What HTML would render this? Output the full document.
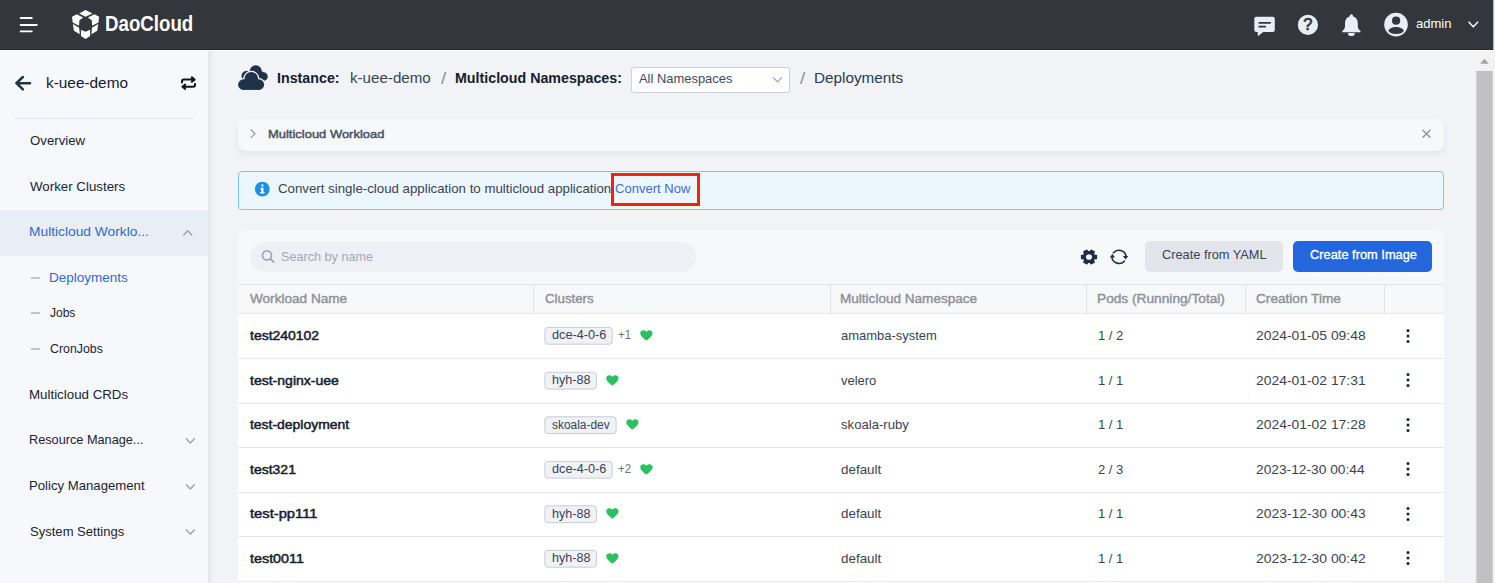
<!DOCTYPE html>
<html><head><meta charset="utf-8">
<style>
*{box-sizing:border-box;margin:0;padding:0}
html,body{width:1495px;height:583px;overflow:hidden;background:#f2f3f7;font-family:"Liberation Sans",sans-serif}
.abs{position:absolute}
.t{position:absolute;white-space:nowrap;line-height:1;transform-origin:0 0}
#top{position:absolute;left:0;top:0;width:1494px;height:50px;background:#33363c;border-bottom:1px solid #272a2f}
#topedge{position:absolute;left:0;top:50px;width:1494px;height:1px;background:#fcfcfe;z-index:5}
#side{position:absolute;left:0;top:51px;width:208px;height:532px;background:#f7f8fc}
#sideshadow{position:absolute;left:208px;top:51px;width:6px;height:534px;background:linear-gradient(to right,rgba(40,50,80,.07),rgba(40,50,80,0))}
.dash{position:absolute;left:30.5px;width:9px;height:1.2px;background:#bfc5cf}
.row{position:absolute;left:238px;width:1206px;height:44.6px;background:#fff;border-top:1px solid #e4e7ed}
.tag{position:absolute;border:1px solid #c6cbd6;background:#f1f2f6;border-radius:3px}
.vsep{position:absolute;top:285px;width:1px;height:28px;background:#e1e4ea}
</style></head><body>
<!-- header -->
<div id="top"></div><div id="topedge"></div>
<svg class="abs" style="left:0;top:0" width="210" height="49" viewBox="0 0 210 49">
  <g stroke="#fff" stroke-width="1.8" stroke-linecap="round"><line x1="20.6" y1="18" x2="31.8" y2="18"/><line x1="20.6" y1="25" x2="36.8" y2="25"/><line x1="20.6" y1="31.3" x2="31.8" y2="31.3"/></g>
</svg>
<svg class="abs" style="left:66px;top:4px" width="60" height="40" viewBox="0 0 874 583">
  <g fill="#fff">
   <polygon points="285,88 385,137 285,185 190,137"/>
   <polygon points="88,185 155,150 250,197 195,238 190,318 97,268"/>
   <polygon points="482,185 415,150 320,197 375,238 380,318 473,268"/>
   <polygon points="100,292 192,345 200,440 115,390"/>
   <polygon points="470,292 378,345 370,440 455,390"/>
   <polygon points="220,375 285,405 350,375 352,465 285,510 218,465"/>
  </g>
</svg>
<!-- header right icons -->
<svg class="abs" style="left:1245px;top:8px" width="240" height="34" viewBox="1245 8 240 34">
  <g fill="#e9edf6">
    <!-- chat -->
    <path d="M1256.300 16.700 H1272.800 a2 2 0 0 1 2 2 V30.100 a2 2 0 0 1 -2 2 H1263.200 L1258.600 35.700 a.5 .5 0 0 1 -.85 -.4 V32.100 H1256.300 a2 2 0 0 1 -2 -2 V18.700 a2 2 0 0 1 2 -2z"/>
    <!-- help circle -->
    <circle cx="1307.9" cy="24.9" r="10.1"/>
    <!-- bell -->
    <path d="M1351.400 14.200 a1.600 1.600 0 0 1 1.600 1.600 v.5 c3 .8 4.800 3.600 4.800 6.800 v3.400 c0 1.500 .7 2.800 1.900 3.800 l.7 .6 c.5 .5 .2 1.300 -.5 1.300 h-17 c-.7 0 -1 -.8 -.5 -1.300 l.7 -.6 c1.200 -1 1.900 -2.300 1.900 -3.800 v-3.400 c0 -3.200 1.800 -6 4.800 -6.800 v-.5 a1.600 1.600 0 0 1 1.600 -1.600z"/>
    <path d="M1348 32.900 h6.800 a3.400 3.200 0 0 1 -6.800 0z"/>
    <!-- avatar -->
    <circle cx="1396" cy="24.6" r="11.8"/>
  </g>
  <g fill="#33363c">
    <rect x="1258.400" y="22" width="12.600" height="1.800" rx=".9"/>
    <rect x="1258.400" y="25.800" width="7.700" height="1.800" rx=".9"/>
    <circle cx="1396.100" cy="20.700" r="4.100"/>
    <ellipse cx="1396.100" cy="30.600" rx="7.600" ry="3.500"/>
  </g>
  <text x="1307.9" y="30.4" text-anchor="middle" font-family="Liberation Sans" font-weight="normal" font-size="16.5" fill="#33363c" stroke="#33363c" stroke-width=".7">?</text>
  <path d="M1469 22.2 l4.3 4.6 l4.3 -4.6" fill="none" stroke="#e9edf6" stroke-width="1.6" stroke-linecap="round" stroke-linejoin="round"/>
</svg>

<!-- sidebar -->
<div id="side"></div><div id="sideshadow"></div>
<svg class="abs" style="left:10px;top:70px" width="190" height="26" viewBox="10 70 190 26">
  <g fill="none" stroke="#1e3248" stroke-width="2.5" stroke-linecap="round" stroke-linejoin="round">
    <path d="M30 83.2 H16.8 M22.9 77 L16.4 83.2 L22.9 89.4"/>
  </g>
  <g fill="none" stroke="#10151c" stroke-width="2" stroke-linecap="round" stroke-linejoin="round">
    <path d="M182 82.4 v-1 a1.8 1.8 0 0 1 1.8 -1.8 h10.4 M191.8 77.400 l2.800 2.200 l-2.800 2.200"/>
    <path d="M195 84 v1 a1.8 1.8 0 0 1 -1.8 1.8 h-10.4 M185.200 84.600 l-2.800 2.200 l2.800 2.200"/>
  </g>
</svg>
<div class="abs" style="left:15px;top:117.5px;width:178px;height:1px;background:#e2e5eb"></div>
<div class="abs" style="left:0;top:210px;width:208px;height:45.5px;background:#e9edf5"></div>
<div class="dash" style="top:277.4px"></div>
<div class="dash" style="top:312.4px"></div>
<div class="dash" style="top:348.4px"></div>
<svg class="abs" style="left:180px;top:220px" width="20" height="330" viewBox="180 220 20 330">
  <g fill="none" stroke="#9ea5b3" stroke-width="1.500" stroke-linecap="round" stroke-linejoin="round">
    <path d="M183.700 235 l4 -4.300 l4 4.300"/>
    <path d="M186.300 438.800 l4 4.200 l4 -4.200"/>
    <path d="M186.300 484.800 l4 4.200 l4 -4.200"/>
    <path d="M186.300 529.900 l4 4.200 l4 -4.200"/>
  </g>
</svg>

<!-- breadcrumb -->
<svg class="abs" style="left:230px;top:58px" width="60" height="40" viewBox="0 0 874 583">
  <g fill="#1e3248">
    <circle cx="375" cy="192" r="88"/><circle cx="488" cy="268" r="62"/><circle cx="243" cy="262" r="76"/>
    <rect x="300" y="200" width="188" height="130"/>
  </g>
  <g fill="#f2f3f7" stroke="#f2f3f7" stroke-width="38">
    <circle cx="310" cy="305" r="100"/><circle cx="195" cy="388" r="77"/><circle cx="420" cy="388" r="77"/>
    <rect x="195" y="380" width="225" height="85"/>
  </g>
  <g fill="#1e3248">
    <circle cx="310" cy="305" r="100"/><circle cx="195" cy="388" r="77"/><circle cx="420" cy="388" r="77"/>
    <rect x="195" y="380" width="225" height="85"/>
  </g>
</svg>
<div class="abs" style="left:631px;top:66.5px;width:158.6px;height:26px;border:1px solid #cdd1d9;border-radius:3px;background:#fff"></div>
<svg class="abs" style="left:768px;top:72px" width="18" height="14" viewBox="768 72 18 14"><path d="M773.400 77.600 l4.100 4.200 l4.100 -4.200" fill="none" stroke="#9aa0ab" stroke-width="1.2" stroke-linecap="round" stroke-linejoin="round"/></svg>

<!-- collapsible card -->
<div class="abs" style="left:238px;top:119px;width:1206px;height:31.600px;border-radius:8px;background:#f7f8fa;box-shadow:0 3px 6px rgba(30,40,70,.07)"></div>
<svg class="abs" style="left:246px;top:126px" width="14" height="16" viewBox="246 126 14 16"><path d="M251 129.800 l4 3.900 l-4 3.900" fill="none" stroke="#979dab" stroke-width="1.300" stroke-linecap="round" stroke-linejoin="round"/></svg>
<svg class="abs" style="left:1418px;top:126px" width="16" height="16" viewBox="1418 126 16 16"><path d="M1423 130.300 l7 7 M1430 130.300 l-7 7" fill="none" stroke="#8b919d" stroke-width="1.400" stroke-linecap="round"/></svg>

<!-- alert -->
<div class="abs" style="left:238px;top:171px;width:1206px;height:38.600px;border:1px solid #7fc4ef;border-radius:4px;background:#ebf6fd"></div>
<svg class="abs" style="left:253px;top:180px" width="18" height="18" viewBox="253 180 18 18"><circle cx="262.300" cy="189.100" r="7.400" fill="#1e8fe8"/><circle cx="262.400" cy="185.500" r="1.150" fill="#fff"/><path d="M260.700 187.700 h2.800 v4.600 h1 v1.300 h-4.500 v-1.300 h1.100 v-3.300 h-.9z" fill="#fff"/></svg>
<div class="abs" style="left:611px;top:173.300px;width:89px;height:32.500px;border:3px solid #f5210e"></div>

<!-- table card -->
<div class="abs" style="left:238px;top:230px;width:1206px;height:360px;border-radius:8px;background:#f7f8fa"></div>
<div class="abs" style="left:250px;top:241.500px;width:446px;height:30.500px;border-radius:16px;background:#eef0f5"></div>
<svg class="abs" style="left:258px;top:247px" width="20" height="20" viewBox="258 247 20 20"><circle cx="267" cy="255.400" r="4.500" fill="none" stroke="#a0a6b1" stroke-width="1.700"/><path d="M270.400 258.800 l3.300 3.300" stroke="#a0a6b1" stroke-width="1.700" stroke-linecap="round"/></svg>
<!-- gear -->
<svg class="abs" style="left:1079px;top:246.500px;transform:scaleY(.94)" width="20" height="20" viewBox="-10 -10 20 20">
  <g fill="#1c2f45" transform="rotate(30)"><circle r="6.300"/>
  <g id="tth"><rect x="-2.500" y="-8.100" width="5" height="4" rx="1"/></g>
  <use href="#tth" transform="rotate(60)"/><use href="#tth" transform="rotate(120)"/><use href="#tth" transform="rotate(180)"/><use href="#tth" transform="rotate(240)"/><use href="#tth" transform="rotate(300)"/></g>
  <circle r="3" fill="#f7f8fa"/>
</svg>
<!-- refresh -->
<svg class="abs" style="left:1108px;top:245.600px" width="22" height="22" viewBox="-11 -11 22 22">
  <g fill="none" stroke="#1c2f45" stroke-width="1.600" stroke-linecap="round">
    <path d="M-5.600 -4.200 A7.100 6.700 0 0 1 7 -0.800"/>
    <path d="M5.400 4.200 A7.100 6.700 0 0 1 -7 0.300"/>
  </g>
  <path d="M3.900 -1 h5.300 l-2.600 3.600z M-9.200 0.400 h5.200 l-2.600 -3.500z" fill="#1c2f45"/>
</svg>
<div class="abs" style="left:1145.200px;top:241px;width:137.600px;height:30.600px;border-radius:5px;background:#e3e5ec"></div>
<div class="abs" style="left:1293px;top:241px;width:139px;height:30.600px;border-radius:5px;background:#2467dc"></div>
<!-- table head -->
<div class="abs" style="left:238px;top:284px;width:1206px;height:29px;background:#f7f8fa;border-top:1px solid #e1e4ea"></div>
<div class="vsep" style="left:533px"></div><div class="vsep" style="left:830px"></div><div class="vsep" style="left:1086px"></div><div class="vsep" style="left:1245px"></div><div class="vsep" style="left:1384px"></div>
<div class="row" style="top:313.00px"></div>
<svg class="abs" style="left:542px;top:324px" width="74" height="24" viewBox="542 324 74 24"><rect x="544.90" y="327.40" width="67.30" height="16.80" rx="3" fill="#f1f2f6" stroke="#c6cbd6"/></svg>
<svg class="abs" style="left:640.3px;top:330.00px" width="12.800" height="10.800" viewBox="0 0 26 24" preserveAspectRatio="none"><path fill="#2dbf62" d="M13 23.5 C13 23.5 0.5 15 0.5 7.2 C0.5 3.2 3.6 0.5 7 0.5 C9.6 0.5 11.8 1.9 13 4 C14.2 1.9 16.4 0.5 19 0.5 C22.4 0.5 25.5 3.2 25.5 7.2 C25.5 15 13 23.5 13 23.5 Z"/></svg>
<svg class="abs" style="left:1404.5px;top:328.10px" width="6" height="16" viewBox="0 0 6 16"><circle cx="3" cy="2.400" r="1.5" fill="#16243a"/><circle cx="3" cy="8" r="1.5" fill="#16243a"/><circle cx="3" cy="13.600" r="1.5" fill="#16243a"/></svg>
<div class="row" style="top:358.32px"></div>
<svg class="abs" style="left:542px;top:369px" width="58" height="24" viewBox="542 369 58 24"><rect x="544.90" y="372.28" width="51.50" height="16.80" rx="3" fill="#f1f2f6" stroke="#c6cbd6"/></svg>
<svg class="abs" style="left:606.2px;top:374.88px" width="12.800" height="10.800" viewBox="0 0 26 24" preserveAspectRatio="none"><path fill="#2dbf62" d="M13 23.5 C13 23.5 0.5 15 0.5 7.2 C0.5 3.2 3.6 0.5 7 0.5 C9.6 0.5 11.8 1.9 13 4 C14.2 1.9 16.4 0.5 19 0.5 C22.4 0.5 25.5 3.2 25.5 7.2 C25.5 15 13 23.5 13 23.5 Z"/></svg>
<svg class="abs" style="left:1404.5px;top:372.28px" width="6" height="16" viewBox="0 0 6 16"><circle cx="3" cy="2.400" r="1.5" fill="#16243a"/><circle cx="3" cy="8" r="1.5" fill="#16243a"/><circle cx="3" cy="13.600" r="1.5" fill="#16243a"/></svg>
<div class="row" style="top:402.84px"></div>
<svg class="abs" style="left:542px;top:414px" width="78" height="24" viewBox="542 414 78 24"><rect x="544.90" y="416.80" width="71.20" height="16.80" rx="3" fill="#f1f2f6" stroke="#c6cbd6"/></svg>
<svg class="abs" style="left:625.9px;top:419.40px" width="12.800" height="10.800" viewBox="0 0 26 24" preserveAspectRatio="none"><path fill="#2dbf62" d="M13 23.5 C13 23.5 0.5 15 0.5 7.2 C0.5 3.2 3.6 0.5 7 0.5 C9.6 0.5 11.8 1.9 13 4 C14.2 1.9 16.4 0.5 19 0.5 C22.4 0.5 25.5 3.2 25.5 7.2 C25.5 15 13 23.5 13 23.5 Z"/></svg>
<svg class="abs" style="left:1404.5px;top:416.80px" width="6" height="16" viewBox="0 0 6 16"><circle cx="3" cy="2.400" r="1.5" fill="#16243a"/><circle cx="3" cy="8" r="1.5" fill="#16243a"/><circle cx="3" cy="13.600" r="1.5" fill="#16243a"/></svg>
<div class="row" style="top:447.36px"></div>
<svg class="abs" style="left:542px;top:458px" width="74" height="24" viewBox="542 458 74 24"><rect x="544.90" y="461.32" width="67.30" height="16.80" rx="3" fill="#f1f2f6" stroke="#c6cbd6"/></svg>
<svg class="abs" style="left:640.3px;top:463.92px" width="12.800" height="10.800" viewBox="0 0 26 24" preserveAspectRatio="none"><path fill="#2dbf62" d="M13 23.5 C13 23.5 0.5 15 0.5 7.2 C0.5 3.2 3.6 0.5 7 0.5 C9.6 0.5 11.8 1.9 13 4 C14.2 1.9 16.4 0.5 19 0.5 C22.4 0.5 25.5 3.2 25.5 7.2 C25.5 15 13 23.5 13 23.5 Z"/></svg>
<svg class="abs" style="left:1404.5px;top:461.32px" width="6" height="16" viewBox="0 0 6 16"><circle cx="3" cy="2.400" r="1.5" fill="#16243a"/><circle cx="3" cy="8" r="1.5" fill="#16243a"/><circle cx="3" cy="13.600" r="1.5" fill="#16243a"/></svg>
<div class="row" style="top:491.88px"></div>
<svg class="abs" style="left:542px;top:503px" width="58" height="24" viewBox="542 503 58 24"><rect x="544.90" y="505.84" width="51.50" height="16.80" rx="3" fill="#f1f2f6" stroke="#c6cbd6"/></svg>
<svg class="abs" style="left:606.2px;top:508.44px" width="12.800" height="10.800" viewBox="0 0 26 24" preserveAspectRatio="none"><path fill="#2dbf62" d="M13 23.5 C13 23.5 0.5 15 0.5 7.2 C0.5 3.2 3.6 0.5 7 0.5 C9.6 0.5 11.8 1.9 13 4 C14.2 1.9 16.4 0.5 19 0.5 C22.4 0.5 25.5 3.2 25.5 7.2 C25.5 15 13 23.5 13 23.5 Z"/></svg>
<svg class="abs" style="left:1404.5px;top:505.84px" width="6" height="16" viewBox="0 0 6 16"><circle cx="3" cy="2.400" r="1.5" fill="#16243a"/><circle cx="3" cy="8" r="1.5" fill="#16243a"/><circle cx="3" cy="13.600" r="1.5" fill="#16243a"/></svg>
<div class="row" style="top:536.40px"></div>
<svg class="abs" style="left:542px;top:547px" width="58" height="24" viewBox="542 547 58 24"><rect x="544.90" y="550.36" width="51.50" height="16.80" rx="3" fill="#f1f2f6" stroke="#c6cbd6"/></svg>
<svg class="abs" style="left:606.2px;top:552.96px" width="12.800" height="10.800" viewBox="0 0 26 24" preserveAspectRatio="none"><path fill="#2dbf62" d="M13 23.5 C13 23.5 0.5 15 0.5 7.2 C0.5 3.2 3.6 0.5 7 0.5 C9.6 0.5 11.8 1.9 13 4 C14.2 1.9 16.4 0.5 19 0.5 C22.4 0.5 25.5 3.2 25.5 7.2 C25.5 15 13 23.5 13 23.5 Z"/></svg>
<svg class="abs" style="left:1404.5px;top:550.36px" width="6" height="16" viewBox="0 0 6 16"><circle cx="3" cy="2.400" r="1.5" fill="#16243a"/><circle cx="3" cy="8" r="1.5" fill="#16243a"/><circle cx="3" cy="13.600" r="1.5" fill="#16243a"/></svg>
<div class="row" style="top:580.92px"></div>
<div class="t" style="left:105.13px;top:14.40px;font-size:21.5px;font-weight:bold;color:#ffffff;transform:scaleX(0.8694);">DaoCloud</div>
<div class="t" style="left:1416.10px;top:16.77px;font-size:13.5px;font-weight:normal;color:#ffffff;transform:scaleX(0.9652);">admin</div>
<div class="t" style="left:45.70px;top:77.23px;font-size:13.9px;font-weight:normal;color:#121c2c;transform:scaleX(1.1063);">k-uee-demo</div>
<div class="t" style="left:30.20px;top:133.87px;font-size:13.5px;font-weight:normal;color:#1c2333;transform:scaleX(0.9786);">Overview</div>
<div class="t" style="left:30.20px;top:179.77px;font-size:13.5px;font-weight:normal;color:#1c2333;transform:scaleX(0.9859);">Worker Clusters</div>
<div class="t" style="left:29.18px;top:224.87px;font-size:13.5px;font-weight:normal;color:#3468d0;transform:scaleX(1.0200);">Multicloud Worklo...</div>
<div class="t" style="left:48.90px;top:270.77px;font-size:13.5px;font-weight:normal;color:#3468d0;transform:scaleX(1.0008);">Deployments</div>
<div class="t" style="left:49.90px;top:305.77px;font-size:13.5px;font-weight:normal;color:#1c2333;transform:scaleX(0.8899);">Jobs</div>
<div class="t" style="left:49.90px;top:341.77px;font-size:13.5px;font-weight:normal;color:#1c2333;transform:scaleX(0.9151);">CronJobs</div>
<div class="t" style="left:29.21px;top:387.57px;font-size:13.5px;font-weight:normal;color:#1c2333;transform:scaleX(0.9862);">Multicloud CRDs</div>
<div class="t" style="left:29.26px;top:433.07px;font-size:13.5px;font-weight:normal;color:#1c2333;transform:scaleX(0.9414);">Resource Manage...</div>
<div class="t" style="left:29.23px;top:478.87px;font-size:13.5px;font-weight:normal;color:#1c2333;transform:scaleX(0.9745);">Policy Management</div>
<div class="t" style="left:30.20px;top:524.77px;font-size:13.5px;font-weight:normal;color:#1c2333;transform:scaleX(0.9664);">System Settings</div>
<div class="t" style="left:277.37px;top:69.85px;font-size:15.3px;font-weight:bold;color:#16202e;transform:scaleX(0.9314);">Instance:</div>
<div class="t" style="left:349.70px;top:71.15px;font-size:14.0px;font-weight:normal;color:#3a4352;transform:scaleX(1.0812);">k-uee-demo</div>
<div class="t" style="left:440.80px;top:69.61px;font-size:17px;font-weight:normal;color:#8a8f99;transform:scaleX(1.1000);">/</div>
<div class="t" style="left:455.07px;top:69.85px;font-size:15.3px;font-weight:bold;color:#16202e;transform:scaleX(0.9308);">Multicloud Namespaces:</div>
<div class="t" style="left:639.30px;top:71.87px;font-size:13.5px;font-weight:normal;color:#3d4a60;transform:scaleX(0.9572);">All Namespaces</div>
<div class="t" style="left:799.80px;top:69.61px;font-size:17px;font-weight:normal;color:#8a8f99;transform:scaleX(1.1000);">/</div>
<div class="t" style="left:813.92px;top:71.18px;font-size:14.2px;font-weight:normal;color:#2a3a52;transform:scaleX(1.0771);">Deployments</div>
<div class="t" style="left:268.00px;top:129.15px;font-size:11.4px;font-weight:normal;color:#4a5363;transform:scaleX(1.1371);-webkit-text-stroke:0.45px #4a5363">Multicloud Workload</div>
<div class="t" style="left:278.30px;top:181.97px;font-size:13.5px;font-weight:normal;color:#3a4352;transform:scaleX(0.9823);">Convert single-cloud application to multicloud application</div>
<div class="t" style="left:615.30px;top:181.97px;font-size:13.5px;font-weight:normal;color:#3f6fd1;transform:scaleX(0.9658);">Convert Now</div>
<div class="t" style="left:281.20px;top:249.77px;font-size:13.5px;font-weight:normal;color:#a3a9b4;transform:scaleX(0.9356);">Search by name</div>
<div class="t" style="left:1161.70px;top:247.77px;font-size:13.5px;font-weight:normal;color:#3a4352;transform:scaleX(0.9463);">Create from YAML</div>
<div class="t" style="left:1309.70px;top:247.77px;font-size:13.5px;font-weight:normal;color:#ffffff;transform:scaleX(0.9506);-webkit-text-stroke:0.35px #fff">Create from Image</div>
<div class="t" style="left:250.40px;top:291.87px;font-size:13.5px;font-weight:normal;color:#8d9099;transform:scaleX(1.0059);-webkit-text-stroke:0.4px #8d9099">Workload Name</div>
<div class="t" style="left:544.80px;top:291.87px;font-size:13.5px;font-weight:normal;color:#8d9099;transform:scaleX(0.9827);-webkit-text-stroke:0.4px #8d9099">Clusters</div>
<div class="t" style="left:839.80px;top:291.87px;font-size:13.5px;font-weight:normal;color:#8d9099;transform:scaleX(1.0040);-webkit-text-stroke:0.4px #8d9099">Multicloud Namespace</div>
<div class="t" style="left:1097.19px;top:291.87px;font-size:13.5px;font-weight:normal;color:#8d9099;transform:scaleX(1.0147);-webkit-text-stroke:0.4px #8d9099">Pods (Running/Total)</div>
<div class="t" style="left:1256.00px;top:291.87px;font-size:13.5px;font-weight:normal;color:#8d9099;transform:scaleX(1.0099);-webkit-text-stroke:0.4px #8d9099">Creation Time</div>
<div class="t" style="left:250.40px;top:328.77px;font-size:13.5px;font-weight:normal;color:#16202e;transform:scaleX(1.0347);-webkit-text-stroke:0.5px #16202e">test240102</div>
<div class="t" style="left:551.50px;top:329.32px;font-size:12.5px;font-weight:normal;color:#3a4352;transform:scaleX(1.0160);">dce-4-0-6</div>
<div class="t" style="left:617.80px;top:329.32px;font-size:12.5px;font-weight:normal;color:#6b7380;transform:scaleX(0.9091);">+1</div>
<div class="t" style="left:840.80px;top:328.77px;font-size:13.5px;font-weight:normal;color:#3a4352;transform:scaleX(0.9605);">amamba-system</div>
<div class="t" style="left:1097.63px;top:328.77px;font-size:13.5px;font-weight:normal;color:#3a4352;transform:scaleX(0.9653);">1 / 2</div>
<div class="t" style="left:1255.90px;top:328.77px;font-size:13.5px;font-weight:normal;color:#3a4352;transform:scaleX(1.0285);">2024-01-05 09:48</div>
<div class="t" style="left:250.40px;top:373.65px;font-size:13.5px;font-weight:normal;color:#16202e;transform:scaleX(1.0395);-webkit-text-stroke:0.5px #16202e">test-nginx-uee</div>
<div class="t" style="left:551.50px;top:374.20px;font-size:12.5px;font-weight:normal;color:#3a4352;transform:scaleX(1.0087);">hyh-88</div>
<div class="t" style="left:840.80px;top:373.65px;font-size:13.5px;font-weight:normal;color:#3a4352;transform:scaleX(0.9597);">velero</div>
<div class="t" style="left:1097.63px;top:373.65px;font-size:13.5px;font-weight:normal;color:#3a4352;transform:scaleX(0.9653);">1 / 1</div>
<div class="t" style="left:1255.90px;top:373.65px;font-size:13.5px;font-weight:normal;color:#3a4352;transform:scaleX(1.0285);">2024-01-02 17:31</div>
<div class="t" style="left:250.40px;top:418.17px;font-size:13.5px;font-weight:normal;color:#16202e;transform:scaleX(1.0322);-webkit-text-stroke:0.5px #16202e">test-deployment</div>
<div class="t" style="left:551.50px;top:418.72px;font-size:12.5px;font-weight:normal;color:#3a4352;transform:scaleX(0.9526);">skoala-dev</div>
<div class="t" style="left:840.80px;top:418.17px;font-size:13.5px;font-weight:normal;color:#3a4352;transform:scaleX(0.9724);">skoala-ruby</div>
<div class="t" style="left:1097.63px;top:418.17px;font-size:13.5px;font-weight:normal;color:#3a4352;transform:scaleX(0.9653);">1 / 1</div>
<div class="t" style="left:1255.90px;top:418.17px;font-size:13.5px;font-weight:normal;color:#3a4352;transform:scaleX(1.0285);">2024-01-02 17:28</div>
<div class="t" style="left:250.40px;top:462.69px;font-size:13.5px;font-weight:normal;color:#16202e;transform:scaleX(1.0371);-webkit-text-stroke:0.5px #16202e">test321</div>
<div class="t" style="left:551.50px;top:463.24px;font-size:12.5px;font-weight:normal;color:#3a4352;transform:scaleX(1.0160);">dce-4-0-6</div>
<div class="t" style="left:617.80px;top:463.24px;font-size:12.5px;font-weight:normal;color:#6b7380;transform:scaleX(0.9091);">+2</div>
<div class="t" style="left:840.80px;top:462.69px;font-size:13.5px;font-weight:normal;color:#3a4352;transform:scaleX(0.9931);">default</div>
<div class="t" style="left:1097.70px;top:462.69px;font-size:13.5px;font-weight:normal;color:#3a4352;transform:scaleX(0.9627);">2 / 3</div>
<div class="t" style="left:1255.90px;top:462.69px;font-size:13.5px;font-weight:normal;color:#3a4352;transform:scaleX(1.0189);">2023-12-30 00:44</div>
<div class="t" style="left:250.40px;top:507.21px;font-size:13.5px;font-weight:normal;color:#16202e;transform:scaleX(1.0916);-webkit-text-stroke:0.5px #16202e">test-pp111</div>
<div class="t" style="left:551.50px;top:507.76px;font-size:12.5px;font-weight:normal;color:#3a4352;transform:scaleX(1.0087);">hyh-88</div>
<div class="t" style="left:840.80px;top:507.21px;font-size:13.5px;font-weight:normal;color:#3a4352;transform:scaleX(0.9931);">default</div>
<div class="t" style="left:1097.63px;top:507.21px;font-size:13.5px;font-weight:normal;color:#3a4352;transform:scaleX(0.9653);">1 / 1</div>
<div class="t" style="left:1255.90px;top:507.21px;font-size:13.5px;font-weight:normal;color:#3a4352;transform:scaleX(1.0285);">2023-12-30 00:43</div>
<div class="t" style="left:250.40px;top:551.73px;font-size:13.5px;font-weight:normal;color:#16202e;transform:scaleX(1.0620);-webkit-text-stroke:0.5px #16202e">test0011</div>
<div class="t" style="left:551.50px;top:552.28px;font-size:12.5px;font-weight:normal;color:#3a4352;transform:scaleX(1.0087);">hyh-88</div>
<div class="t" style="left:840.80px;top:551.73px;font-size:13.5px;font-weight:normal;color:#3a4352;transform:scaleX(0.9931);">default</div>
<div class="t" style="left:1097.63px;top:551.73px;font-size:13.5px;font-weight:normal;color:#3a4352;transform:scaleX(0.9653);">1 / 1</div>
<div class="t" style="left:1255.90px;top:551.73px;font-size:13.5px;font-weight:normal;color:#3a4352;transform:scaleX(1.0285);">2023-12-30 00:42</div>
<!-- scrollbar -->
<svg class="abs" style="left:1470px;top:0" width="25" height="583" viewBox="1470 0 25 583">
  <rect x="1474.600" y="51" width="20.400" height="534" fill="#f3f3f4"/>
  <rect x="1493.300" y="0" width="1.700" height="50" fill="#f1f1f1"/>
  <rect x="1476.300" y="71" width="16.400" height="512" fill="#c1c1c1"/>
  <path d="M1480.200 63.800 L1484.500 58.800 L1488.800 63.800z" fill="#a3a3a3"/>
</svg>
</body></html>
